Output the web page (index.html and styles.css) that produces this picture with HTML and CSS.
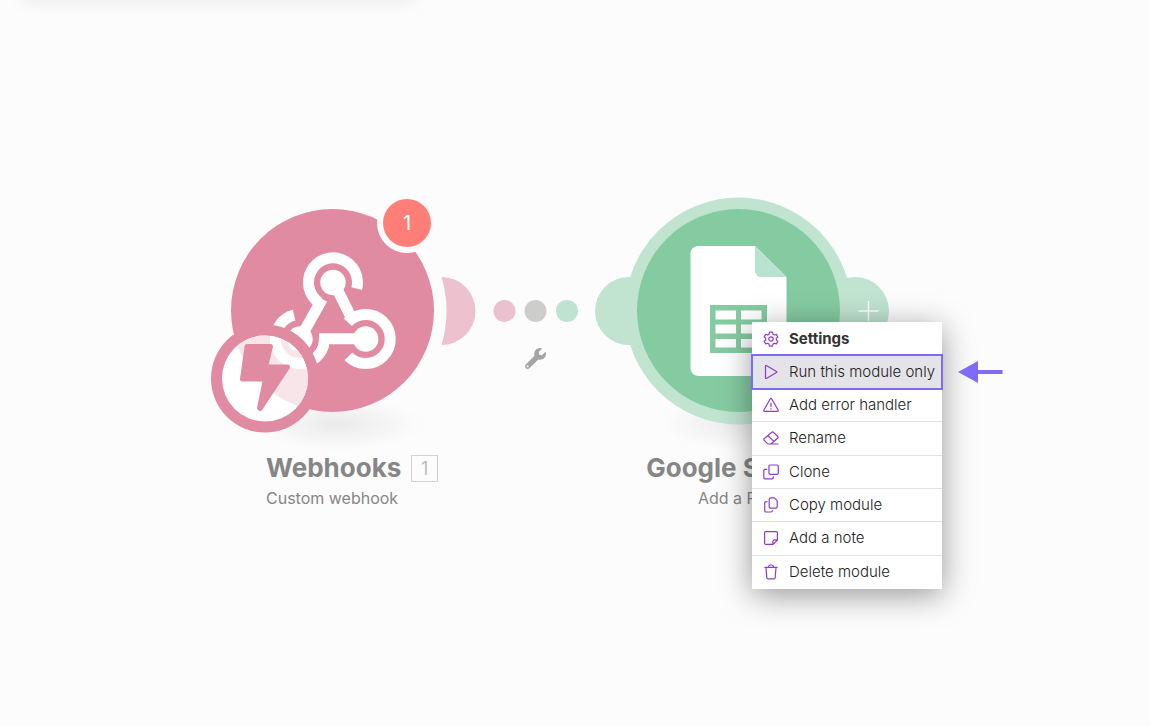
FILE: index.html
```html
<!DOCTYPE html>
<html lang="en">
<head>
<meta charset="utf-8">
<meta name="viewport" content="width=device-width, initial-scale=1">
<title>Scenario editor</title>
<link rel="stylesheet" href="styles.css">
</head>
<body>
<main class="canvas">
  <div class="panel-edge"></div>

  <section class="node node-webhooks">
    <svg class="node-art" width="290" height="260" viewBox="200 190 290 260" aria-hidden="true">
      <defs>
        <radialGradient id="floor"><stop offset="0" stop-color="#000" stop-opacity=".07"/><stop offset=".5" stop-color="#000" stop-opacity=".035"/><stop offset="1" stop-color="#000" stop-opacity="0"/></radialGradient>
        <clipPath id="lens"><circle cx="265" cy="378.500" r="43"/></clipPath>
        <g id="hook" fill="none" stroke="#fff" stroke-width="11">
          <path d="M356.700 288.600A24.500 24.500 0 1 0 319 302.500"/>
          <path d="M322.300 299L302 335M337 289L351 317"/>
          <path d="M347.800 322.300A24.500 24.500 0 1 1 348.400 356.300"/>
          <path d="M319 338.700H362"/>
          <path d="M324.300 337A24.500 24.500 0 1 1 294.100 315.200"/>
          <g fill="#fff" stroke="none"><circle cx="333" cy="282.500" r="12.700"/><circle cx="365.700" cy="339" r="12.700"/><circle cx="300" cy="339" r="12.700"/></g>
        </g>
      </defs>
      <ellipse cx="338" cy="424" rx="84" ry="27" fill="url(#floor)"/>
      <path d="M441.500 277A34 34 0 0 1 441.500 345Q451.500 311 441.500 277Z" fill="#edc1cd"/>
      <circle cx="332.500" cy="310.500" r="101.500" fill="#e08ba2"/>
      <use href="#hook"/>
      <path d="M314.500 338.500V333.300H319.500Q317.500 336 318 338.700Q318.300 342 317 344.100H312.500Z" fill="#e08ba2"/>
      <circle cx="265" cy="378.500" r="54" fill="#e08ba2"/>
      <circle cx="265" cy="378.500" r="43" fill="#fff"/>
      <g clip-path="url(#lens)"><circle cx="332.500" cy="310.500" r="101.500" fill="#f8e5ea"/><use href="#hook"/></g>
      <path d="M247 346.500H270.500L265.500 367H287.500L260 408.500L259.500 408L265.500 379H242.500Z" fill="#e08ba2" stroke="#e08ba2" stroke-width="5" stroke-linejoin="round"/>
      <circle cx="407" cy="223" r="30" fill="#fcfcfc"/>
      <circle cx="407" cy="223" r="24" fill="#ff7f78"/>
    </svg>
    <span class="alert-count">1</span>
    <div class="label label-webhooks">
      <div class="title-row"><h2>Webhooks</h2><span class="order">1</span></div>
      <p>Custom webhook</p>
    </div>
  </section>

  <svg class="link" width="90" height="64" viewBox="490 310 90 64" aria-hidden="true">
    <circle cx="504.500" cy="322" r="11" fill="#eac2cf"/>
    <circle cx="535.500" cy="322" r="11" fill="#cdcecb"/>
    <circle cx="567" cy="322" r="11" fill="#c0e2d0"/>
    <svg x="525" y="359" width="21" height="21" viewBox="0 0 512 512" overflow="visible"><path fill="#a5a5a5" d="M507.730 109.100c-2.240-9.030-13.540-12.090-20.120-5.510l-74.360 74.360-67.880-11.310-11.310-67.880 74.360-74.360c6.620-6.620 3.430-17.900-5.660-20.160-47.380-11.740-99.550.91-136.580 37.930-39.640 39.640-50.550 97.100-34.050 147.200L18.740 402.760c-24.990 24.990-24.990 65.510 0 90.500 24.990 24.990 65.510 24.990 90.500 0l213.210-213.210c50.120 16.710 107.470 5.680 147.370-34.220 37.070-37.070 49.700-89.320 37.910-136.730zM64 472c-13.250 0-24-10.750-24-24 0-13.260 10.750-24 24-24s24 10.740 24 24c0 13.250-10.750 24-24 24z"/></svg>
  </svg>

  <section class="node node-sheets">
    <svg class="node-art" width="310" height="260" viewBox="590 190 310 260" aria-hidden="true">
      <ellipse cx="744" cy="424" rx="84" ry="27" fill="url(#floor)"/>
      <g fill="#c0e4d0"><circle cx="629" cy="311" r="34"/><circle cx="855" cy="311" r="34"/><circle cx="738.500" cy="311" r="113.500"/></g>
      <circle cx="738.500" cy="310.500" r="101.500" fill="#85cba2"/>
      <path d="M698 246H755L786.500 277V368a8 8 0 0 1-8 8H698.500a8 8 0 0 1-8-8V253.500a7.500 7.500 0 0 1 7.500-7.500Z" fill="#fff"/>
      <path d="M755 246L786.500 277H761a6 6 0 0 1-6-6Z" fill="#b8e3d0"/>
      <path d="M710 305H767V353H710Z" fill="#85cba2"/>
      <path d="M715.500 310.500h20.500v9h-20.500zM741 310.500h20.500v9H741zM715.500 324.500h20.500v9h-20.500zM741 324.500h20.500v9H741zM715.500 339h20.500v8.500h-20.500zM741 339h20.500v8.500H741z" fill="#fff"/>
      <path d="M858.500 311H878.500M868.500 301V321" stroke="#fff" stroke-width="1.500"/>
    </svg>
    <div class="label label-sheets">
      <h2>Google Sheets</h2>
      <p>Add a Row</p>
    </div>
  </section>

  <div class="menu" role="menu">
    <button class="item strong" role="menuitem"><svg class="icon" viewBox="0 0 16 16"><path d="M6.500 1.200h3l.5 2 1.300.8 2-.6 1.500 2.600-1.500 1.400v1.500l1.500 1.400-1.500 2.600-2-.6-1.300.8-.5 2h-3l-.5-2-1.300-.8-2 .6-1.500-2.600 1.500-1.400V7.400L1.200 6l1.500-2.600 2 .6L6 3.200z"/><circle cx="8" cy="8" r="2.200"/></svg>Settings</button>
    <button class="item selected" role="menuitem"><svg class="icon" viewBox="0 0 16 16"><path d="M2.500 2.100v11.800q0 .9.800.5L13.500 8.600q.9-.6 0-1.200L3.300 1.600q-.8-.4-.8.500z"/></svg>Run this module only</button>
    <button class="item" role="menuitem"><svg class="icon" viewBox="0 0 16 16"><path d="M7.200 2q.8-1.200 1.600 0l6.300 11q.5 1.200-.8 1.300H1.700Q.4 14.200.9 13zM8 6v3.700M8 11.700v.3"/></svg>Add error handler</button>
    <button class="item" role="menuitem"><svg class="icon" viewBox="0 0 16 16"><path d="M8.800 2.300L1.200 8.800q-.9.800 0 1.600l3 3q.7.600 1.400.6h2.200l6.800-5.700q1-.9.100-1.800l-4.200-4.200q-.8-.8-1.700 0zM4.900 5.700l6.100 5.700M5 14h10"/></svg>Rename</button>
    <button class="item" role="menuitem"><svg class="icon" viewBox="0 0 16 16"><rect x="6" y="1" width="9.300" height="9.300" rx="1.300"/><path d="M3.700 5.300H2Q.8 5.300.8 6.500V13.500Q.8 14.800 2 14.800H9q1.300 0 1.300-1.300v-.8"/></svg>Clone</button>
    <button class="item" role="menuitem"><svg class="icon" viewBox="0 0 16 16"><path d="M8 .9h3.300L14.200 3.600V9.800q0 1.300-1.300 1.300H7.500q-1.300 0-1.300-1.300V2.300Q6.200.9 8 .9zM4 4.700H3Q1.700 4.700 1.700 6v7.700Q1.700 15 3 15h5q1.400 0 1.400-1.500"/></svg>Copy module</button>
    <button class="item" role="menuitem"><svg class="icon" viewBox="0 0 16 16"><path d="M2.800 1.700H13.200q1.200 0 1.200 1.200V10L10 14.400H2.800q-1.200 0-1.200-1.200V2.900q0-1.200 1.200-1.200zM14.400 9.800H11.500q-1.600 0-1.600 1.600v3"/></svg>Add a note</button>
    <button class="item" role="menuitem"><svg class="icon" viewBox="0 0 16 16"><path d="M1.900 3.300h12.200M5.300 3.300Q5.700 1 7 1h2q1.300 0 1.700 2.300M3 3.300l.8 10.300q.1 1.200 1.300 1.200h5.800q1.200 0 1.300-1.200L13 3.300"/></svg>Delete module</button>
  </div>

  <svg class="pointer" width="46" height="24" viewBox="0 0 46 24" aria-hidden="true"><path d="M0 12L20 1V10H44.500V14H20V23Z" fill="#7f6bfa"/></svg>
</main>
</body>
</html>
```
FILE: styles.css
```css
* { box-sizing: border-box; }

body {
  margin: 0;
  background: #fcfcfc;
  font-family: Inter, "Liberation Sans", sans-serif;
}

h2, p { margin: 0; }

.canvas {
  position: relative;
  min-height: 100vh;
  overflow: hidden;
}

.panel-edge {
  position: absolute;
  top: -20px;
  left: 22px;
  width: 393px;
  height: 20px;
  box-shadow: 0 2px 18px rgba(0, 0, 0, 0.07);
}

.node { position: absolute; top: 190px; }
.node-webhooks { left: 200px; }
.node-sheets { left: 590px; }
.node-art { display: block; }

.alert-count {
  position: absolute;
  top: 21px;
  left: 195px;
  width: 24px;
  text-align: center;
  font-size: 20px;
  line-height: 24px;
  color: #fff;
}

.label { white-space: nowrap; color: #868686; }
.label-webhooks { padding-left: 66px; }
.label-sheets { width: 297px; text-align: center; }

.label h2 {
  font-size: 26px;
  line-height: 36px;
  font-weight: 700;
}

.label p {
  margin-top: 2px;
  font-size: 16px;
  line-height: 20px;
}

.title-row {
  display: flex;
  align-items: center;
  gap: 10px;
}

.order {
  width: 27px;
  height: 27px;
  border: 1px solid #d2d2d2;
  text-align: center;
  font-size: 18px;
  line-height: 25px;
  color: #bdbdbd;
}

.link { position: absolute; left: 490px; top: 299px; overflow: visible; }

.menu {
  position: absolute;
  top: 322px;
  left: 752px;
  width: 190px;
  height: 267px;
  display: grid;
  grid-template-columns: minmax(0, 1fr);
  grid-auto-rows: 1fr;
  background: #fff;
  box-shadow: 0 6px 30px rgba(0, 0, 0, 0.4);
}

.item {
  display: flex;
  align-items: center;
  gap: 10px;
  padding: 0 0 0 11px;
  border: 0;
  border-bottom: 1px solid #e3e3e3;
  background: none;
  font: 300 15px/20px Inter, "Liberation Sans", sans-serif;
  color: #222;
  white-space: nowrap;
}

.item:last-child { border-bottom: 0; }
.strong { font-weight: 700; border-bottom: 0; color: #333; }

.selected {
  border-bottom: 0;
  background: #e4e3e8;
  outline: 2px solid #7f6bf0;
  outline-offset: -1px;
}

.icon {
  flex: none;
  width: 16px;
  height: 16px;
  fill: none;
  stroke: #8f3bca;
  stroke-width: 1.2;
  stroke-linejoin: round;
  stroke-linecap: round;
}

.pointer { position: absolute; left: 958px; top: 360px; }
```
